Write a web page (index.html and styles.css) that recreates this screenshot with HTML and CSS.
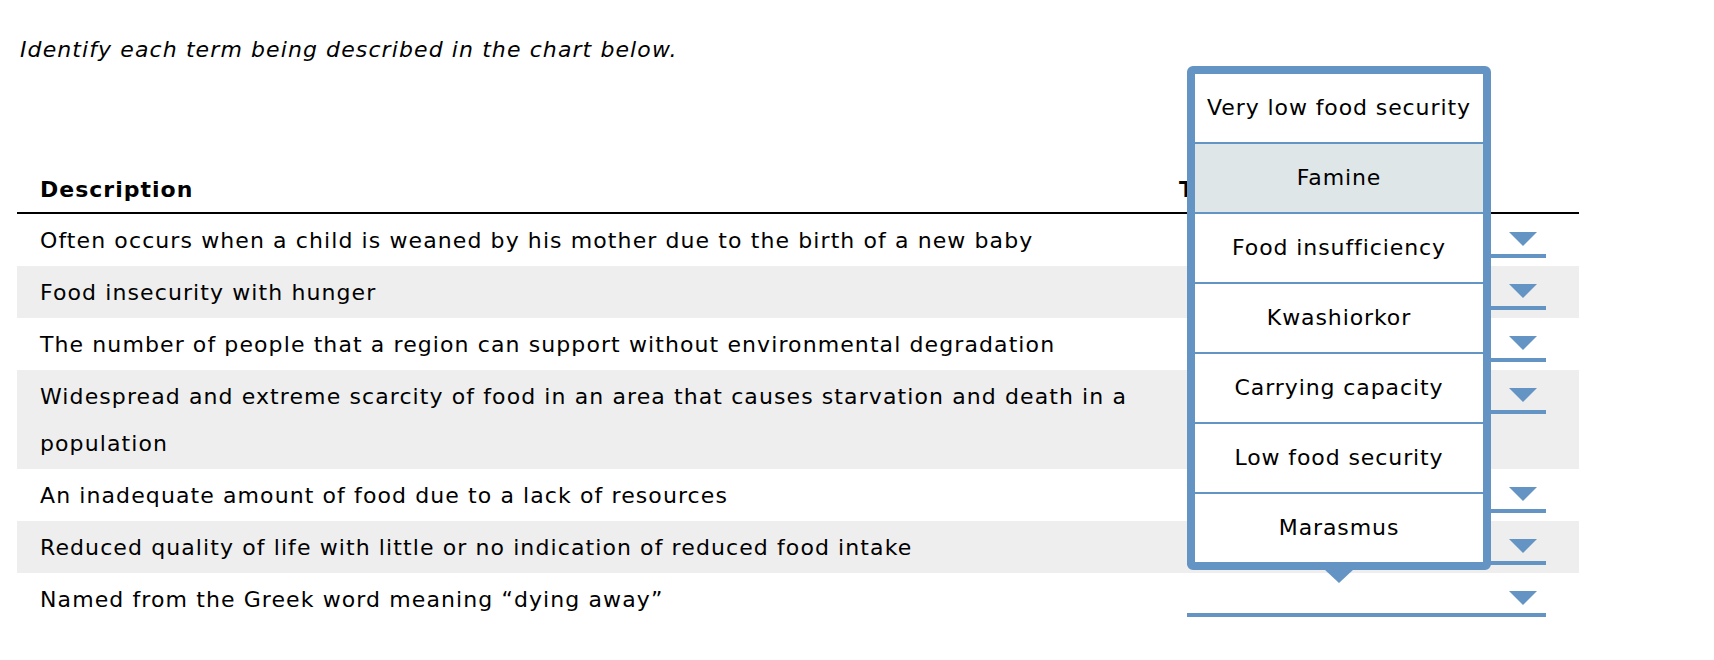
FILE: index.html
```html
<!DOCTYPE html>
<html>
<head>
<meta charset="utf-8">
<link rel="stylesheet" href="styles.css">
</head>
<body>
<div class="page">
  <p class="prompt">Identify each term being described in the chart below.</p>
  <div class="chart">
    <div class="row head">
      <div class="hcell hdesc">Description</div>
      <div class="hcell hterm">Term</div>
    </div>
    <div class="row">
      <div class="cell desc">Often occurs when a child is weaned by his mother due to the birth of a new baby</div>
      <div class="cell term"><div class="select"><span class="caret"></span></div></div>
    </div>
    <div class="row alt">
      <div class="cell desc">Food insecurity with hunger</div>
      <div class="cell term"><div class="select"><span class="caret"></span></div></div>
    </div>
    <div class="row">
      <div class="cell desc">The number of people that a region can support without environmental degradation</div>
      <div class="cell term"><div class="select"><span class="caret"></span></div></div>
    </div>
    <div class="row alt">
      <div class="cell desc">Widespread and extreme scarcity of food in an area that causes starvation and death in a population</div>
      <div class="cell term"><div class="select"><span class="caret"></span></div></div>
    </div>
    <div class="row">
      <div class="cell desc">An inadequate amount of food due to a lack of resources</div>
      <div class="cell term"><div class="select"><span class="caret"></span></div></div>
    </div>
    <div class="row alt">
      <div class="cell desc">Reduced quality of life with little or no indication of reduced food intake</div>
      <div class="cell term"><div class="select"><span class="caret"></span></div></div>
    </div>
    <div class="row">
      <div class="cell desc">Named from the Greek word meaning “dying away”</div>
      <div class="cell term">
        <div class="select open">
          <span class="caret"></span>
          <ul class="menu">
            <li class="option">Very low food security</li>
            <li class="option hover">Famine</li>
            <li class="option">Food insufficiency</li>
            <li class="option">Kwashiorkor</li>
            <li class="option">Carrying capacity</li>
            <li class="option">Low food security</li>
            <li class="option">Marasmus</li>
          </ul>
        </div>
      </div>
    </div>
  </div>
</div>
</body>
</html>
```

FILE: styles.css
```css
html, body {
  margin: 0;
  padding: 0;
  background: #ffffff;
}

body {
  font-family: "DejaVu Sans", Verdana, sans-serif;
  font-size: 22px;
  color: #000000;
  letter-spacing: 1.1px;
}

.prompt {
  margin: 37px 0 0 0;
  padding-left: 20px;
  font-style: italic;
  line-height: 26px;
}

.chart {
  margin: 87px 0 0 17px;
  width: 1562px;
}

.row {
  display: grid;
  grid-template-columns: 1162px 400px;
}

.row.alt {
  background: #eeeeee;
}

.head {
  border-bottom: 2px solid #000000;
  font-weight: bold;
  letter-spacing: 1px;
}

.hcell {
  padding: 27px 0 9px 0;
  line-height: 26px;
}

.hdesc {
  padding-left: 23px;
}

.cell.desc {
  padding: 3px 20px 2px 23px;
  line-height: 47px;
}

.cell.term {
  padding-top: 3px;
}

.select {
  position: relative;
  margin-left: 8px;
  width: 359px;
  height: 37px;
  border-bottom: 4px solid #6394c4;
  display: flex;
  justify-content: flex-end;
  align-items: flex-end;
}

.caret {
  width: 0;
  height: 0;
  border-left: 14px solid transparent;
  border-right: 14px solid transparent;
  border-top: 14px solid #6394c4;
  margin: 0 9px 8px 0;
}

.menu {
  position: absolute;
  left: 0;
  bottom: 43px;
  width: 288px;
  margin: 0;
  padding: 0;
  list-style: none;
  background: #ffffff;
  border: 8px solid #6394c4;
  border-radius: 6px;
  letter-spacing: 0.9px;
}

.menu::after {
  content: "";
  position: absolute;
  left: 50%;
  top: calc(100% + 7px);
  transform: translateX(-50%);
  width: 0;
  height: 0;
  border-left: 15px solid transparent;
  border-right: 15px solid transparent;
  border-top: 14px solid #6394c4;
}

.option {
  height: 68px;
  line-height: 68px;
  text-align: center;
  border-top: 2px solid #6394c4;
  white-space: nowrap;
}

.option:first-child {
  border-top: none;
}

.option.hover {
  background: #dfe6e8;
}
```
